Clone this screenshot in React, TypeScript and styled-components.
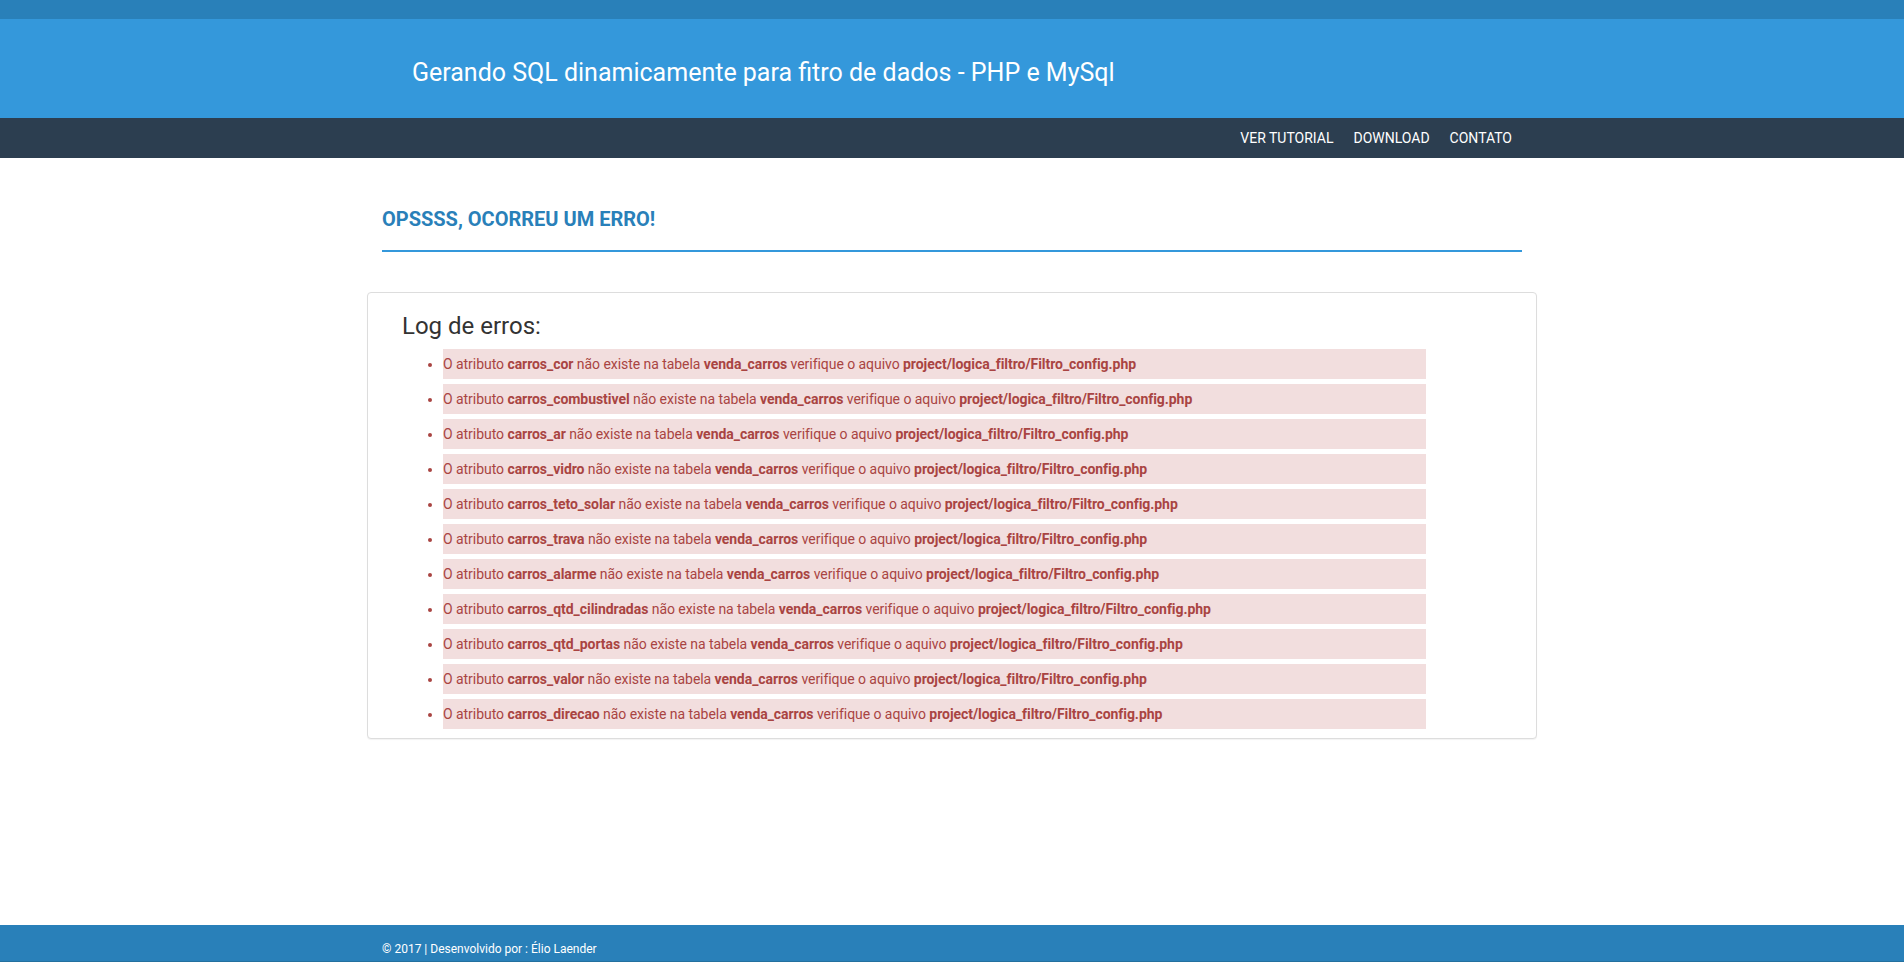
import styled, { createGlobalStyle } from "styled-components";

const GlobalStyle = createGlobalStyle`
  html, body {
    margin: 0;
    padding: 0;
  }

  body {
    font-family: Roboto, "Liberation Sans", Arial, sans-serif;
    font-size: 14px;
    line-height: 1.42857;
    color: #333;
    background: #fff;
  }

  * {
    box-sizing: border-box;
  }
`;

// campos que faltam na tabela
const missingFields = [
  "carros_cor",
  "carros_combustivel",
  "carros_ar",
  "carros_vidro",
  "carros_teto_solar",
  "carros_trava",
  "carros_alarme",
  "carros_qtd_cilindradas",
  "carros_qtd_portas",
  "carros_valor",
  "carros_direcao",
];

const TABLE_NAME = "venda_carros";
const CONFIG_FILE = "project/logica_filtro/Filtro_config.php";

const navLinks = ["VER TUTORIAL", "DOWNLOAD", "CONTATO"];

export default function App() {
  return (
    <Page>
      <GlobalStyle />

      {/* cabeçalho */}
      <TopStrip />
      <Header>
        <Container>
          <SiteTitle>Gerando SQL dinamicamente para fitro de dados - PHP e MySql</SiteTitle>
        </Container>
      </Header>

      <NavBar>
        <NavInner>
          {navLinks.map((link) => (
            <NavLink key={link} href="#">
              {link}
            </NavLink>
          ))}
        </NavInner>
      </NavBar>

      {/* conteúdo */}
      <Main>
        <Container>
          <ErrorHeading>OPSSSS, OCORREU UM ERRO!</ErrorHeading>

          <Panel>
            <PanelTitle>Log de erros:</PanelTitle>
            <ErrorList>
              {missingFields.map((field) => (
                <ErrorItem key={field}>
                  O atributo <b>{field}</b> não existe na tabela <b>{TABLE_NAME}</b> verifique o
                  aquivo <b>{CONFIG_FILE}</b>
                </ErrorItem>
              ))}
            </ErrorList>
          </Panel>
        </Container>
      </Main>

      <Footer>
        <Container>
          <FooterText>© 2017 | Desenvolvido por : Élio Laender</FooterText>
        </Container>
      </Footer>
    </Page>
  );
}

const Page = styled.div`
  min-height: 100vh;
  display: flex;
  flex-direction: column;
`;

const Container = styled.div`
  width: 1170px;
  margin: 0 auto;
`;

const TopStrip = styled.div`
  height: 19px;
  background-color: #2980b9;
`;

const Header = styled.header`
  height: 99px;
  background-color: #3498db;
  padding-top: 40px;
`;

const SiteTitle = styled.h1`
  margin: 0;
  padding-left: 45px;
  font-size: 25px;
  font-weight: 400;
  line-height: 1.1;
  color: #fff;
`;

const NavBar = styled.nav`
  height: 40px;
  background-color: #2c3e50;
`;

const NavInner = styled.div`
  width: 1170px;
  height: 100%;
  margin: 0 auto;
  padding-right: 15px;
  display: flex;
  justify-content: flex-end;
  align-items: center;
`;

const NavLink = styled.a`
  padding: 0 10px;
  font-size: 14px;
  line-height: 20px;
  color: #fff;
  text-decoration: none;
`;

const Main = styled.main`
  flex: 1;
  padding-bottom: 40px;
`;

const ErrorHeading = styled.h2`
  margin: 50px 15px 0;
  padding-bottom: 20px;
  border-bottom: 2px solid #3498db;
  font-size: 20px;
  font-weight: 700;
  line-height: 1.1;
  color: #2980b9;
`;

const Panel = styled.div`
  margin-top: 40px;
  padding: 20px 34px 4px;
  background: #fff;
  border: 1px solid #ddd;
  border-radius: 4px;
  box-shadow: 0 1px 1px rgba(0, 0, 0, 0.05);
`;

const PanelTitle = styled.h3`
  margin: 0 0 10px;
  font-size: 24px;
  font-weight: 400;
  line-height: 1.1;
  color: #333;
`;

const ErrorList = styled.ul`
  width: 1024px;
  margin: 0;
  padding-left: 41px;
`;

const ErrorItem = styled.li`
  margin-bottom: 5px;
  padding: 5px 0;
  background-color: #f2dede;
  color: #a94442;
  font-size: 14px;
  line-height: 20px;
  letter-spacing: -0.05px;

  b {
    font-weight: 700;
  }
`;

const Footer = styled.footer`
  height: 37px;
  background-color: #2980b9;
  border-bottom: 1px solid #23709f;
`;

const FooterText = styled.p`
  margin: 0;
  padding: 16px 15px 0;
  font-size: 12px;
  line-height: 17px;
  color: #fff;
`;
